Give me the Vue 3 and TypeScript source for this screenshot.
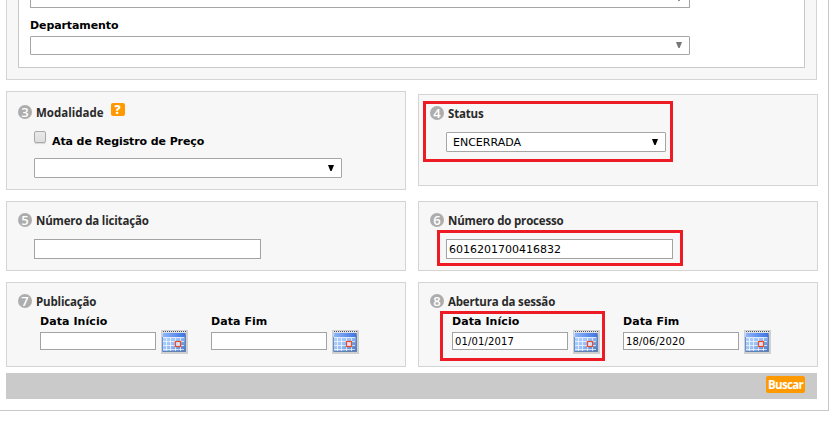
<script setup lang="ts">
import { defineComponent, h, ref } from 'vue'

const modalidade = ref('')
const status = ref('ENCERRADA')
const licitacao = ref('')
const processo = ref('6016201700416832')
const publicacao = ref([
  { label: 'Data Início', value: '' },
  { label: 'Data Fim', value: '' },
])
const abertura = ref([
  { label: 'Data Início', value: '01/01/2017' },
  { label: 'Data Fim', value: '18/06/2020' },
])

const CalendarIcon = defineComponent({
  setup() {
    return () =>
      h('svg', { width: 27, height: 24, viewBox: '0 0 27 24' }, [
        h('defs', [
          h('linearGradient', { id: 'calHead', x1: 0, y1: 0, x2: 1, y2: 0 }, [
            h('stop', { offset: 0, 'stop-color': '#8fb4f8' }),
            h('stop', { offset: 1, 'stop-color': '#3f74e2' }),
          ]),
          h('linearGradient', { id: 'calBody', x1: 0, y1: 0, x2: 1, y2: 1 }, [
            h('stop', { offset: 0, 'stop-color': '#c0dcff' }),
            h('stop', { offset: 0.55, 'stop-color': '#9cc0f6' }),
            h('stop', { offset: 1, 'stop-color': '#4673c4' }),
          ]),
        ]),
        h('rect', { width: 27, height: 24, fill: '#d0d0d0' }),
        h('rect', { x: 2, y: 3, width: 23, height: 19, fill: '#8796aa' }),
        h('rect', { x: 1, y: 1, width: 23, height: 20, fill: 'url(#calBody)' }),
        h('rect', { x: 1, y: 1, width: 24, height: 2, fill: '#dde1e5' }),
        h('path', { d: 'M2 1.5H25', stroke: '#50565c', 'stroke-dasharray': '1 1' }),
        h('rect', { x: 2, y: 3, width: 22, height: 4, fill: 'url(#calHead)' }),
        h('path', {
          d: 'M2 7.5H23M2 11.5H23M2 15.5H23M2 19.5H23M5.5 8V21M9.5 8V21M14.5 8V21M19.5 8V21',
          stroke: '#f2f8ff',
          'stroke-opacity': 0.75,
          fill: 'none',
        }),
        h('path', { d: 'M1.5 7V21.5H24.5V5', stroke: '#5379b5', fill: 'none', 'stroke-opacity': 0.7 }),
        h('rect', { x: 14.5, y: 11.5, width: 5, height: 5, fill: '#d9e4fa', stroke: '#f04a24', 'stroke-width': 1.2 }),
      ])
  },
})
</script>

<template>
  <div class="page">
    <section class="organ">
      <div class="organ-inner">
        <div class="select wide first muted"><i class="arrow"></i></div>
        <label class="dept">Departamento</label>
        <div class="select wide muted"><i class="arrow"></i></div>
      </div>
    </section>

    <div class="grid">
      <section class="panel p3">
        <h2><b class="num">3</b><span class="t3">Modalidade</span><b class="help">?</b></h2>
        <div class="check"><i class="box"></i><label>Ata de Registro de Preço</label></div>
        <div class="select mod">{{ modalidade }}<i class="arrow"></i></div>
      </section>
      <section class="panel p4">
        <h2><b class="num">4</b><span>Status</span></h2>
        <div class="select stat">{{ status }}<i class="arrow"></i></div>
        <div class="mark m4"></div>
      </section>
      <section class="panel p5">
        <h2><b class="num">5</b><span>Número da licitação</span></h2>
        <input v-model="licitacao" class="long" type="text" />
      </section>
      <section class="panel p5">
        <h2><b class="num">6</b><span>Número do processo</span></h2>
        <input v-model="processo" class="long" type="text" />
        <div class="mark m6"></div>
      </section>
      <section class="panel p7">
        <h2><b class="num">7</b><span>Publicação</span></h2>
        <div class="dates">
          <div v-for="d in publicacao" :key="d.label" class="date">
            <label>{{ d.label }}</label>
            <div class="row"><input v-model="d.value" type="text" /><CalendarIcon /></div>
          </div>
        </div>
      </section>
      <section class="panel p7">
        <h2><b class="num">8</b><span>Abertura da sessão</span></h2>
        <div class="dates">
          <div v-for="d in abertura" :key="d.label" class="date">
            <label>{{ d.label }}</label>
            <div class="row"><input v-model="d.value" type="text" /><CalendarIcon /></div>
          </div>
        </div>
        <div class="mark m8"></div>
      </section>
    </div>

    <footer class="actions"><button type="button">Buscar</button></footer>
  </div>
</template>

<style>
body {
  background: #fff;
}
</style>

<style scoped>
* {
  box-sizing: border-box;
}
.page {
  width: 829px;
  height: 411px;
  padding-left: 6px;
  border-right: 1px solid #c8c8c8;
  border-bottom: 1px solid #c8c8c8;
  font: 11px/14px Verdana, "DejaVu Sans", sans-serif;
  color: #000;
  overflow: hidden;
}
label {
  display: block;
  font-weight: bold;
  letter-spacing: -0.1px;
  white-space: nowrap;
}
.organ {
  width: 811px;
  height: 80px;
  padding: 0 11px;
  background: #f7f7f7;
  border: 1px solid #d4d4d4;
  border-top: 0;
}
.organ-inner {
  height: 68px;
  padding-left: 11px;
  background: #fff;
  border: 1px solid #c8c8c8;
  border-top: 0;
}
.select {
  position: relative;
  height: 20px;
  padding: 1px 0 0 6px;
  background: #fff;
  border: 1px solid #a6a6a6;
  border-radius: 1px;
  font-size: 11px;
  line-height: 18px;
}
.select.wide {
  width: 660px;
  height: 19px;
}
.select.first {
  height: 8px;
  border-top: 0;
  border-radius: 0 0 1px 1px;
}
.arrow {
  position: absolute;
  right: 7px;
  top: 6px;
  width: 6px;
  height: 6px;
  background: #000;
  clip-path: polygon(0 0, 100% 0, 60% 100%, 40% 100%);
}
.muted .arrow {
  background: #777;
  top: 5px;
}
.first .arrow {
  top: -5px;
}
.dept {
  margin: 11px 0 3px;
}
.grid {
  display: grid;
  grid-template-columns: 400px 400px;
  column-gap: 12px;
  row-gap: 11px;
  margin-top: 11px;
}
.panel {
  position: relative;
  padding-left: 11px;
  background: #f7f7f7;
  border: 1px solid #d4d4d4;
}
.p3 {
  height: 99px;
  padding-top: 11px;
}
.p4 {
  height: 92px;
  margin-top: 3px;
  padding-top: 9px;
}
.p5 {
  height: 70px;
  padding-top: 9px;
}
.p7 {
  height: 85px;
  padding-top: 9px;
}
h2 {
  display: flex;
  align-items: center;
  height: 18px;
  margin: 0;
  font: bold 11.5px/18px "Open Sans", "Noto Sans", sans-serif;
  letter-spacing: -0.17px;
  color: #2a2a2a;
  white-space: nowrap;
}
h2 span {
  padding-top: 2px;
}
.t3 {
  letter-spacing: 0;
}
.num {
  width: 14px;
  height: 14px;
  margin-right: 4px;
  border-radius: 50%;
  background: #adadad;
  color: #fff;
  font-size: 13px;
  font-weight: 600;
  line-height: 14px;
  letter-spacing: 0;
  text-align: center;
}
.help {
  width: 14px;
  height: 13px;
  margin: -5px 0 0 7px;
  border-radius: 2px;
  background: #f90;
  color: #fff;
  font-size: 12px;
  line-height: 13px;
  letter-spacing: 0;
  text-align: center;
}
.check {
  display: flex;
  margin: 10px 0 0 16px;
}
.check label {
  margin: 4px 0 0 6px;
}
.box {
  width: 12px;
  height: 12px;
  border: 1px solid #aaa;
  border-radius: 2px;
  background: linear-gradient(#e9e9e9, #dedede);
  box-shadow: 0 1px 1px #0002;
}
.mod {
  width: 308px;
  margin: 9px 0 0 16px;
}
.stat {
  width: 220px;
  margin: 10px 0 0 16px;
}
input {
  display: block;
  margin: 0;
  padding: 0 2px;
  border: 1px solid #a3a3a3;
  border-radius: 0;
  background: #fff;
  color: #000;
  font: 11px Verdana, "DejaVu Sans", sans-serif;
  outline: 0;
}
.long {
  width: 227px;
  height: 20px;
  margin: 10px 0 0 16px;
}
.dates {
  display: flex;
  margin: 5px 0 0 22px;
}
.date {
  width: 171px;
}
.date label {
  letter-spacing: 0.07px;
}
.row {
  display: flex;
  align-items: flex-start;
  margin-top: 1px;
}
.row input {
  width: 116px;
  height: 18px;
  margin: 2px 5px 0 0;
  padding-top: 1px;
  font-size: 10px;
  letter-spacing: 0.15px;
}
.mark {
  position: absolute;
  border: 3px solid #ed1c24;
  pointer-events: none;
}
.m4 {
  left: 4px;
  top: 6px;
  width: 250px;
  height: 61px;
}
.m6 {
  left: 18px;
  top: 28px;
  width: 246px;
  height: 36px;
}
.m8 {
  left: 21px;
  top: 28px;
  width: 165px;
  height: 50px;
}
.actions {
  display: flex;
  justify-content: flex-end;
  width: 811px;
  height: 26px;
  margin-top: 6px;
  padding: 3px 12px 0 0;
  background: #cacaca;
}
button {
  width: 39px;
  height: 17px;
  padding: 0;
  border: 0;
  border-radius: 2px;
  background: #f90;
  color: #fff;
  font: bold 11.5px/16px "Open Sans", sans-serif;
  letter-spacing: -0.7px;
}
</style>
